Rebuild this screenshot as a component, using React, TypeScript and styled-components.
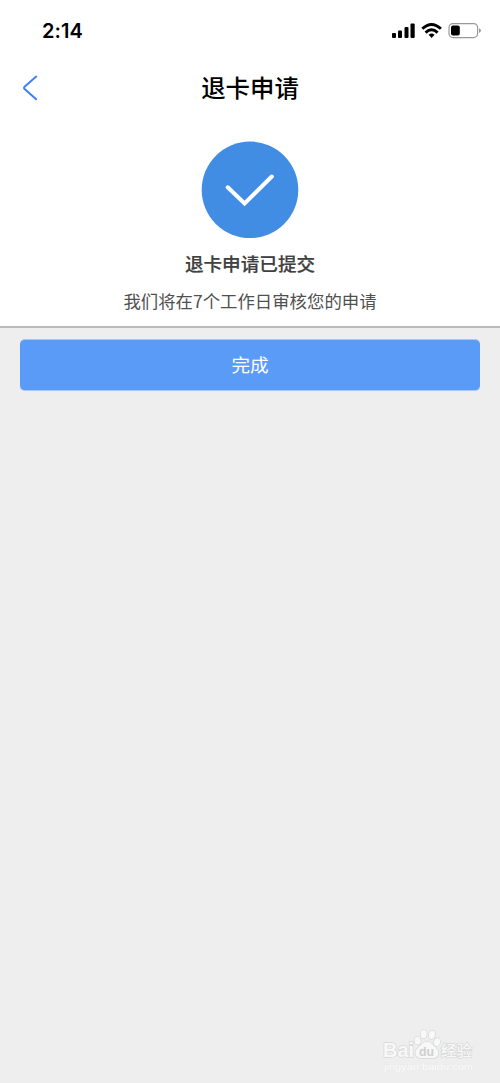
import React from "react";
import styled, { createGlobalStyle } from "styled-components";

const GlobalStyle = createGlobalStyle`
  * { box-sizing: border-box; }
  body { margin: 0; background: #eeeeee; }
`;

const Screen = styled.div`
  position: relative;
  display: flex;
  flex-direction: column;
  width: 100%;
  height: 1083px;
  overflow: hidden;
  background: #eeeeee;
  font-family: "Noto Sans CJK SC", sans-serif;
`;

const StatusBar = styled.header`
  display: flex;
  align-items: center;
  justify-content: space-between;
  height: 61px;
  padding: 0 18px 0 42px;
  background: #fff;
`;

const Time = styled.time`
  font: 600 20px/24px Inter, sans-serif;
  letter-spacing: 0.05px;
  color: #000;
`;

const StatusIcons = styled.svg`
  display: block;
  width: 90px;
  height: 18px;
`;

const NavBar = styled.nav`
  display: grid;
  grid-template-columns: 60px 1fr 60px;
  align-items: center;
  height: 54px;
  background: #fff;
`;

const BackButton = styled.button`
  display: flex;
  padding: 0 0 0 20px;
  border: 0;
  background: none;
`;

const Title = styled.h1`
  margin: 0 0 2px;
  text-align: center;
  font-size: 24.4px;
  line-height: 36px;
  font-weight: 500;
  color: #000;
`;

const Result = styled.section`
  display: flex;
  flex-direction: column;
  align-items: center;
  height: 213px;
  padding-top: 26px;
  background: #fff;
  border-bottom: 2px solid #bbbbbb;
`;

const SuccessMark = styled.svg`
  display: block;
  width: 98px;
  height: 98px;
  flex: none;
`;

const Heading = styled.h2`
  margin: 10px 0 0;
  font-size: 18.6px;
  line-height: 28px;
  font-weight: 500;
  color: #404040;
  -webkit-text-stroke: 0.2px #404040;
`;

const Description = styled.p`
  margin: 11px 0 0;
  font-size: 17.4px;
  line-height: 26px;
  color: #505050;
`;

const DoneButton = styled.button`
  height: 52px;
  margin: 11px 20px 0;
  padding: 0 0 3px;
  border: solid #a9c8f3;
  border-width: 1px 0;
  border-radius: 5px;
  background: #5b9bf8;
  color: #fff;
  font-family: inherit;
  font-size: 18.6px;
  font-weight: 400;
`;

const Watermark = styled.svg`
  position: absolute;
  left: 378px;
  top: 1024px;
  width: 104px;
  height: 52px;
`;

export default function App() {
  return (
    <>
      <GlobalStyle />
      <Screen>
        <StatusBar>
          <Time>2:14</Time>
          <StatusIcons viewBox="392 22 90 18">
            <rect x="392" y="33" width="4" height="5" rx="1" />
            <rect x="398" y="30.5" width="4" height="7.5" rx="1" />
            <rect x="404.5" y="27" width="4" height="11" rx="1" />
            <rect x="410.5" y="23.5" width="4.2" height="14.5" rx="1" />
            <g fill="none" stroke="#000" strokeWidth="2.9">
              <path d="M422.3 28.8Q431.5 20.2 440.9 28.8" />
              <path d="M425.6 32.6Q431.5 27 437.6 32.6" />
            </g>
            <path d="M428.6 34.8Q431.6 32.4 434.6 34.8L431.6 37.9Z" />
            <rect x="449" y="23.6" width="28.6" height="14" rx="4" fill="none" stroke="#999" strokeWidth="1.2" />
            <rect x="451" y="25.6" width="8.8" height="10" rx="2" />
            <path d="M479 28.2Q481 29.2 481 30.6Q481 32 479 33Z" fill="#999" />
          </StatusIcons>
        </StatusBar>
        <NavBar>
          <BackButton aria-label="返回">
            <svg width="20" height="28" viewBox="20 74 20 28" fill="none" stroke="#3f80f5" strokeWidth="2" strokeLinecap="round" strokeLinejoin="round">
              <path d="M36.2 76.6L24.3 87.1Q23.6 87.9 24.3 88.7L36.2 99.2" />
            </svg>
          </BackButton>
          <Title>退卡申请</Title>
        </NavBar>
        <Result>
          <SuccessMark viewBox="201 141 98 98">
            <circle cx="250" cy="189.8" r="48.3" fill="#408de3" />
            <path d="M227.7 187.3L244.6 203.5L271.8 176.5" fill="none" stroke="#fff" strokeWidth="4" strokeLinecap="round" />
          </SuccessMark>
          <Heading>退卡申请已提交</Heading>
          <Description>我们将在7个工作日审核您的申请</Description>
        </Result>
        <DoneButton>完成</DoneButton>
        <Watermark viewBox="378 1024 104 52">
          <g fill="#f8f8f8" stroke="#d8d8d8" strokeWidth="1.5" paintOrder="stroke">
            <text x="383" y="1057" fontFamily="Liberation Sans, sans-serif" fontWeight="700" fontSize="19.5" textLength="31" lengthAdjust="spacingAndGlyphs">Bai</text>
            <ellipse cx="417.6" cy="1040.6" rx="3" ry="3.9" transform="rotate(-12 417.6 1040.6)" />
            <ellipse cx="423.7" cy="1034" rx="3.1" ry="4.2" />
            <ellipse cx="432" cy="1034.8" rx="3.1" ry="4.2" transform="rotate(10 432 1034.8)" />
            <ellipse cx="437" cy="1042.2" rx="3" ry="4" transform="rotate(14 437 1042.2)" />
            <path d="M427 1041.5C431 1041.5 432.5 1045 435.5 1047.5C440 1051 439 1058 433.5 1058H421C415 1058 413.5 1051 418.5 1047.5C421.5 1045 423 1041.5 427 1041.5Z" />
            <text x="441" y="1055.5" fontFamily="Noto Sans CJK SC, sans-serif" fontWeight="500" fontSize="15.2" textLength="31" lengthAdjust="spacingAndGlyphs">经验</text>
          </g>
          <text x="419" y="1055.7" fill="#cfcfcf" fontFamily="Liberation Sans, sans-serif" fontWeight="700" fontSize="13.5" textLength="15" lengthAdjust="spacingAndGlyphs">du</text>
          <text x="384" y="1069.5" fill="#fcfcfc" stroke="#e4e4e4" strokeWidth="0.4" paintOrder="stroke" fontFamily="Liberation Sans, sans-serif" fontSize="9.8" textLength="89" lengthAdjust="spacingAndGlyphs">jingyan.baidu.com</text>
        </Watermark>
      </Screen>
    </>
  );
}
